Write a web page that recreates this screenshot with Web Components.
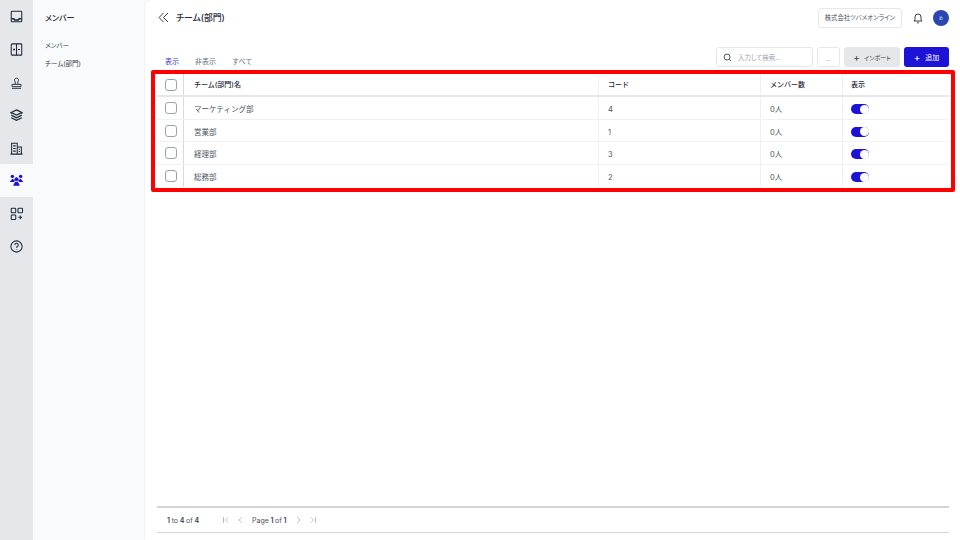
<!DOCTYPE html>
<html lang="ja">
<head>
<meta charset="utf-8">
<title>チーム(部門)</title>
<style>
  html, body { margin: 0; height: 100%; }
  body {
    width: 960px; height: 540px; overflow: hidden; display: flex;
    font-family: Inter, "Noto Sans CJK JP", sans-serif; color: #1f2937; background: #f9fafb;
  }
</style>
</head>
<body>
<icon-rail></icon-rail>
<side-menu></side-menu>
<team-page></team-page>

<script>
const ICONS = [
  '<rect x="3" y="3" width="14" height="14" rx="1"/><path d="M3 13h3.500l1 1.500h5l1-1.500H17" stroke-width="2"/>',
  '<rect x="3" y="2.500" width="14" height="15" rx="1"/><path d="M10 2.500v15M5.500 10h2.500M6.800 8.700v2.600M12 10h2.800"/>',
  '<path d="M4 12.500h12v3H4zM8.300 12.500v-3L7.500 7.500a2.600 2.600 0 1 1 5 0l-.8 2v3M4 17.800h12" stroke-width="1.200"/>',
  '<path d="M10 2.500 17 6l-7 3.500L3 6zM3 9.500 10 13l7-3.500M3 13l7 3.500 7-3.500M3 6v1.500M17 6v1.500" stroke-width="1.700"/>',
  '<path d="M3.500 17.500V3h7.500v14.500M11 8h5.500v9.500M2 17.500h16M5.500 6.500h3.500M5.500 10h3.500M5.500 13.500h3.500M13 11h1.500M13 14h1.500"/>',
  '',
  '<rect x="3" y="3" width="6" height="6" rx="1"/><rect x="12" y="3" width="6" height="6" rx="1"/><rect x="3" y="12" width="6" height="6" rx="1"/><path d="M15 12.500v5M12.500 15h5"/>',
  '<circle cx="10" cy="10" r="7.500"/><path d="M7.800 8a2.300 2.300 0 1 1 3.400 2c-.8.500-1.200 1-1.200 1.800M10 14v.8"/>'
];
const TEAM = '<g fill="#1d12d8" stroke="none"><circle cx="4.500" cy="4.500" r="2.300"/><circle cx="15.500" cy="4.500" r="2.300"/><path d="M.8 12 4.500 7.500 8 9.500 6.500 12zM19.200 12 15.500 7.500 12 9.500 13.500 12z"/><circle cx="10" cy="8.200" r="2.600"/><path d="M5.500 17 8 11.500h4l2.500 5.500z"/></g>';

class IconRail extends HTMLElement {
  constructor() {
    super();
    this.attachShadow({ mode: "open" }).innerHTML = `
    <style>
      :host { display: block; width: 33px; flex: none; background: #e5e7eb; }
      .item { height: 32.900px; display: flex; align-items: center; justify-content: center; }
      .item.on { background: #f9fafb; }
      svg { width: 15px; height: 15px; fill: none; stroke: #1f2937; stroke-width: 1.400; }
    </style>
    ${ICONS.map((d, i) => `<div class="item ${i == 5 ? "on" : ""}"><svg viewBox="0 0 20 20">${i == 5 ? TEAM : d}</svg></div>`).join("")}`;
  }
}

class SideMenu extends HTMLElement {
  constructor() {
    super();
    this.attachShadow({ mode: "open" }).innerHTML = `
    <style>
      :host { display: block; width: 112px; flex: none; padding-left: 12px; box-sizing: border-box; font-feature-settings: "palt"; }
      h2 { margin: 0; padding-top: 12px; height: 41px; box-sizing: border-box; font-size: 8px; line-height: 12px; font-weight: 500; color: #1f2937; }
      div { font-size: 6.500px; line-height: 10px; height: 18px; color: #374151; }
    </style>
    <h2>メンバー</h2>
    <div>メンバー</div>
    <div>チーム(部門)</div>`;
  }
}

class TeamRow extends HTMLElement {
  constructor() {
    super();
    const head = this.hasAttribute("head");
    const cols = (this.getAttribute("cols") || "").split("|");
    const h = this.getAttribute("h") || "22.500";
    this.attachShadow({ mode: "open" }).innerHTML = `
    <style>
      :host { display: grid; grid-template-columns: 26px 415px 162px 82px 107px; height: ${h}px; box-sizing: border-box; line-height: 10px;
        border-bottom: ${head ? "2px solid #e5e7eb" : "1px solid #f0f1f4"}; font-size: ${head ? "7px" : "7.500px"}; font-weight: ${head ? 500 : 400}; color: #4b5563; }
      :host([head]) { color: #1f2937; }
      :host([last]) { border-bottom: 0; }
      .c { display: flex; align-items: center; padding-left: 9px; border-left: 1px solid #eef0f3; }
      .c.chk { padding-left: 8px; padding-top: ${head ? 0 : 1}px; border: 0; }
      .c.name { padding-left: 10px; border-left: 1px solid #d8dae0; }
      .c.txt { padding-top: ${head ? 1 : 5}px; }
      .c.show { padding-left: 8px; padding-top: ${head ? 1 : 3}px; }
      .box { width: 10px; height: 10px; border: 1px solid #9ca3af; border-radius: 3px; background: #fff; }
      .sw { width: 18px; height: 10px; border-radius: 5px; background: #1d12d8; position: relative; }
      .sw::after { content: ""; position: absolute; right: .5px; top: .5px; width: 9px; height: 9px; border-radius: 50%; background: #fff; }
    </style>
    <div class="c chk"><span class="box"></span></div>
    <div class="c name txt">${cols[0]}</div>
    <div class="c txt">${cols[1]}</div>
    <div class="c txt">${cols[2]}</div>
    <div class="c show">${head ? cols[3] : '<span class="sw"></span>'}</div>`;
  }
}

class TeamTable extends HTMLElement {
  constructor() {
    super();
    this.attachShadow({ mode: "open" }).innerHTML = `
    <style>
      :host { display: block; margin: 0 -6px; border: 4px solid #ff0000; border-radius: 2px; padding: 0 2px 1px; background: #fff; width: 792px; }
    </style>
    <slot></slot>`;
  }
}

class PagerBar extends HTMLElement {
  constructor() {
    super();
    this.attachShadow({ mode: "open" }).innerHTML = `
    <style>
      :host { display: flex; align-items: center; height: 27px; margin-top: auto; margin-bottom: 7px; padding-left: 10px; box-sizing: border-box;
        border-top: 2px solid #d1d5db; border-bottom: 1px solid #d1d5db; font-size: 7px; color: #4b5563; }
      b { font-weight: 600; color: #374151; }
      .count { width: 55px; word-spacing: -.3px; }
      .nav { display: flex; align-items: center; gap: 6px; }
      svg { width: 8px; height: 8px; fill: none; stroke: #b8bcc6; stroke-width: 1; }
      .page { margin: 0 2px; word-spacing: -.3px; }
    </style>
    <span class="count"><b>1</b> to <b>4</b> of <b>4</b></span>
    <span class="nav">
      <svg viewBox="0 0 8 8"><path d="M1.500 1v6M6 1.500 3.500 4 6 6.500"/></svg>
      <svg viewBox="0 0 8 8"><path d="M5.500 1.500 3 4l2.500 2.500"/></svg>
      <span class="page">Page <b>1</b> of <b>1</b></span>
      <svg viewBox="0 0 8 8"><path d="M2.500 1.500 5 4 2.500 6.500"/></svg>
      <svg viewBox="0 0 8 8"><path d="M2 1.500 4.500 4 2 6.500M6.500 1v6"/></svg>
    </span>`;
  }
}

class TeamPage extends HTMLElement {
  constructor() {
    super();
    this.attachShadow({ mode: "open" }).innerHTML = `
    <style>
      :host { display: flex; flex-direction: column; flex: 1; min-width: 0; box-sizing: border-box; background: #fff; padding: 0 11px 0 12px;
        border-radius: 6px 0 0 0; box-shadow: 0 0 2px rgba(0,0,0,.12); }
      header { display: flex; align-items: center; height: 35px; box-sizing: border-box; }
      header h1 { margin: 0 0 0 7px; font-size: 8.800px; font-weight: 500; color: #1f2937; flex: 1; font-feature-settings: "palt"; }
      .back { width: 11px; height: 11px; fill: none; stroke: #374151; stroke-width: 1; margin-left: 1px; }
      .co { height: 20px; width: 84px; box-sizing: border-box; border: 1px solid #e5e7eb; border-radius: 3px; font-size: 6.300px; white-space: nowrap; font-feature-settings: "palt"; display: flex; align-items: center; justify-content: center; color: #4b5563; }
      .bell { width: 12px; height: 12px; fill: none; stroke: #1f2937; stroke-width: .9; margin: 0 9px 0 10px; }
      .avatar { width: 16px; height: 16px; border-radius: 50%; background: #2b46b0; color: #dfe4f5; font-size: 4px; display: flex; align-items: center; justify-content: center; }
      .tools { display: flex; align-items: flex-end; height: 35px; box-sizing: border-box; }
      .tabs { display: flex; gap: 16px; flex: 1; font-size: 7px; color: #6b7280; padding: 0 0 4px 8px; }
      .tabs .on { color: #4338ca; }
      .acts { display: flex; gap: 4px; height: 20px; margin-bottom: 3px; font-feature-settings: "palt"; }
      .acts > * { box-sizing: border-box; border-radius: 3px; display: flex; align-items: center; justify-content: center; font-size: 7px; }
      .acts > .search { width: 97px; border: 1px solid #e5e7eb; justify-content: flex-start; padding-left: 6px; gap: 6px; color: #9ca3af; font-size: 6.500px; }
      .search svg { width: 9px; height: 9px; fill: none; stroke: #4b5563; stroke-width: 1.100; }
      .acts > .more { width: 23px; border: 1px solid #e5e7eb; color: #6b7280; padding-top: 3px; font-size: 6px; }
      .acts > .imp { width: 56px; background: #e5e7eb; color: #374151; gap: 4px; font-size: 6px; }
      .add { width: 45px; background: #1d12d8; color: #fff; gap: 5px; }
      .plus { font-size: 10px; line-height: 1; }
    </style>
    <header>
      <svg class="back" viewBox="0 0 11 11"><path d="M5.500 1 1 5.500 5.500 10M10 1 5.500 5.500 10 10"/></svg>
      <h1>チーム(部門)</h1>
      <div class="co">株式会社ツバメオンライン</div>
      <svg class="bell" viewBox="0 0 12 12"><path d="M2 9h8L9 7.500V5a3 3 0 0 0-6 0v2.500zM5 10.800h2"/></svg>
      <div class="avatar">め</div>
    </header>
    <div class="tools">
      <div class="tabs"><span class="on">表示</span><span>非表示</span><span>すべて</span></div>
      <div class="acts">
        <div class="search"><svg viewBox="0 0 10 10"><circle cx="4.500" cy="4.500" r="3.300"/><path d="m7 7 2 2"/></svg>入力して検索...</div>
        <div class="more">...</div>
        <div class="imp"><span class="plus">+</span>インポート</div>
        <div class="add"><span class="plus">+</span>追加</div>
      </div>
    </div>
    <slot name="table"></slot>
    <pager-bar></pager-bar>`;
    const t = document.createElement("team-table");
    t.slot = "table";
    t.innerHTML = `
      <team-row head h="23" cols="チーム(部門)名|コード|メンバー数|表示"></team-row>
      <team-row cols="マーケティング部|4|0人"></team-row>
      <team-row cols="営業部|1|0人"></team-row>
      <team-row cols="経理部|3|0人"></team-row>
      <team-row last cols="総務部|2|0人"></team-row>`;
    this.appendChild(t);
  }
}

customElements.define("icon-rail", IconRail);
customElements.define("side-menu", SideMenu);
customElements.define("team-row", TeamRow);
customElements.define("team-table", TeamTable);
customElements.define("pager-bar", PagerBar);
customElements.define("team-page", TeamPage);
</script>
</body>
</html>
